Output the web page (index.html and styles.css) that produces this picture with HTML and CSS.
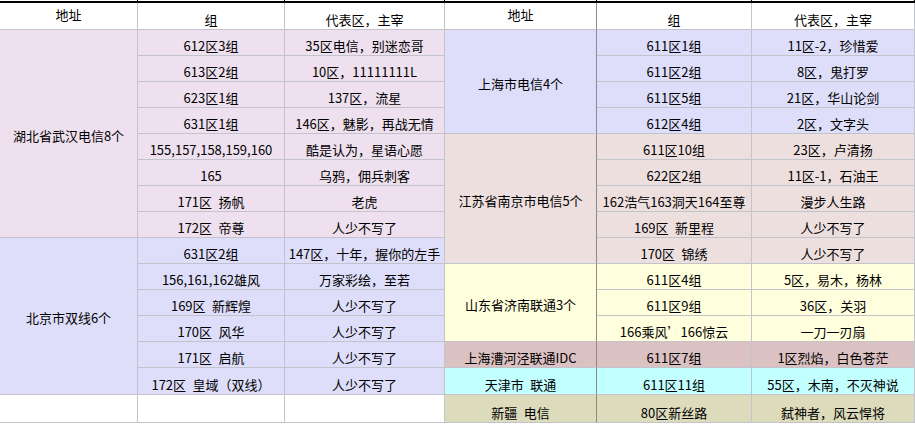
FILE: index.html
```html
<!DOCTYPE html>
<html lang="zh-CN">
<head>
<meta charset="utf-8">
<title>分组表</title>
<link rel="stylesheet" href="styles.css">
</head>
<body>
<div class="sheet">
  <div class="cut"></div><div class="cut"></div><div class="cut"></div><div class="cut"></div><div class="cut"></div><div class="cut"></div>

  <div class="c hd mid">地址</div>
  <div class="c hd">组</div>
  <div class="c hd">代表区，主宰</div>
  <div class="c hd mid addr">地址</div>
  <div class="c hd">组</div>
  <div class="c hd">代表区，主宰</div>

  <!-- row 1 -->
  <div class="c mid hb s8">湖北省武汉电信8个</div>
  <div class="c hb">612区3组</div>
  <div class="c hb">35区电信，别迷恋哥</div>
  <div class="c mid sh s4 addr">上海市电信4个</div>
  <div class="c sh">611区1组</div>
  <div class="c sh">11区-2，珍惜爱</div>
  <!-- row 2 -->
  <div class="c hb">613区2组</div>
  <div class="c hb">10区，11111111L</div>
  <div class="c sh">611区2组</div>
  <div class="c sh">8区，鬼打罗</div>
  <!-- row 3 -->
  <div class="c hb">623区1组</div>
  <div class="c hb">137区，流星</div>
  <div class="c sh">611区5组</div>
  <div class="c sh">21区，华山论剑</div>
  <!-- row 4 -->
  <div class="c hb">631区1组</div>
  <div class="c hb">146区，魅影，再战无情</div>
  <div class="c sh">612区4组</div>
  <div class="c sh">2区，文字头</div>
  <!-- row 5 -->
  <div class="c hb">155,157,158,159,160</div>
  <div class="c hb">酷是认为，星语心愿</div>
  <div class="c mid nj s5 addr">江苏省南京市电信5个</div>
  <div class="c nj">611区10组</div>
  <div class="c nj">23区，卢清扬</div>
  <!-- row 6 -->
  <div class="c hb">165</div>
  <div class="c hb">乌鸦，佣兵刺客</div>
  <div class="c nj">622区2组</div>
  <div class="c nj">11区-1，石油王</div>
  <!-- row 7 -->
  <div class="c hb">171区&ensp;扬帆</div>
  <div class="c hb">老虎</div>
  <div class="c nj">162浩气163洞天164至尊</div>
  <div class="c nj">漫步人生路</div>
  <!-- row 8 -->
  <div class="c hb">172区&ensp;帝尊</div>
  <div class="c hb">人少不写了</div>
  <div class="c nj">169区&ensp;新里程</div>
  <div class="c nj">人少不写了</div>
  <!-- row 9 -->
  <div class="c mid bj s6">北京市双线6个</div>
  <div class="c bj">631区2组</div>
  <div class="c bj">147区，十年，握你的左手</div>
  <div class="c nj">170区&ensp;锦绣</div>
  <div class="c nj">人少不写了</div>
  <!-- row 10 -->
  <div class="c bj">156,161,162雄风</div>
  <div class="c bj">万家彩绘，至若</div>
  <div class="c mid sd s3 addr">山东省济南联通3个</div>
  <div class="c sd">611区4组</div>
  <div class="c sd">5区，易木，杨林</div>
  <!-- row 11 -->
  <div class="c bj">169区&ensp;新辉煌</div>
  <div class="c bj">人少不写了</div>
  <div class="c sd">611区9组</div>
  <div class="c sd">36区，关羽</div>
  <!-- row 12 -->
  <div class="c bj">170区&ensp;风华</div>
  <div class="c bj">人少不写了</div>
  <div class="c sd">166乘风’166惊云</div>
  <div class="c sd">一刀一刃扇</div>
  <!-- row 13 -->
  <div class="c bj">171区&ensp;启航</div>
  <div class="c bj">人少不写了</div>
  <div class="c ch addr">上海漕河泾联通IDC</div>
  <div class="c ch">611区7组</div>
  <div class="c ch">1区烈焰，白色苍茫</div>
  <!-- row 14 -->
  <div class="c bj">172区&ensp;皇域（双线）</div>
  <div class="c bj">人少不写了</div>
  <div class="c tj addr">天津市&ensp;联通</div>
  <div class="c tj">611区11组</div>
  <div class="c tj">55区，木南，不灭神说</div>
  <!-- row 15 -->
  <div class="c"></div>
  <div class="c"></div>
  <div class="c"></div>
  <div class="c xj addr">新疆&ensp;电信</div>
  <div class="c xj">80区新丝路</div>
  <div class="c xj">弑神者，风云悍将</div>
</div>
</body>
</html>
```
FILE: styles.css
```css
html, body {
  margin: 0;
  padding: 0;
  background: #ffffff;
}

body {
  font-family: "Noto Sans CJK SC", "Noto Sans", sans-serif;
  font-size: 13px;
  color: #000;
  overflow: hidden;
}

.sheet {
  display: grid;
  grid-template-columns: 138px 147px 160px 152px 155px 163px;
  grid-template-rows: 3px 27px repeat(13, 26px) 27px 28px;
  width: 915px;
}

.cut {
  box-sizing: border-box;
  border-right: 1px solid #000;
  border-bottom: 2px solid #000;
  background: #fff;
}

.c {
  box-sizing: border-box;
  border-right: 1px solid #c3c3cc;
  border-bottom: 1px solid #c3c3cc;
  display: flex;
  align-items: flex-end;
  justify-content: center;
  line-height: 16px;
  padding-bottom: 1px;
  white-space: nowrap;
  overflow: hidden;
  background: #fff;
}

.c.mid {
  align-items: center;
  padding-bottom: 0;
  padding-top: 4px;
}

.hd.mid {
  padding-top: 0;
  padding-bottom: 3px;
}

.c.addr {
  border-right-color: #8a8a8a;
}

.s3 { grid-row: span 3; }
.s4 { grid-row: span 4; }
.s5 { grid-row: span 5; }
.s6 { grid-row: span 6; }
.s8 { grid-row: span 8; }

.hb { background: #eee0ee; }
.bj { background: #dedefa; }
.sh { background: #dedefa; }
.nj { background: #eedfdf; }
.sd { background: #ffffdd; }
.ch { background: #dcc1c2; }
.tj { background: #c2ffff; }
.xj { background: #dcdbbb; }
```
